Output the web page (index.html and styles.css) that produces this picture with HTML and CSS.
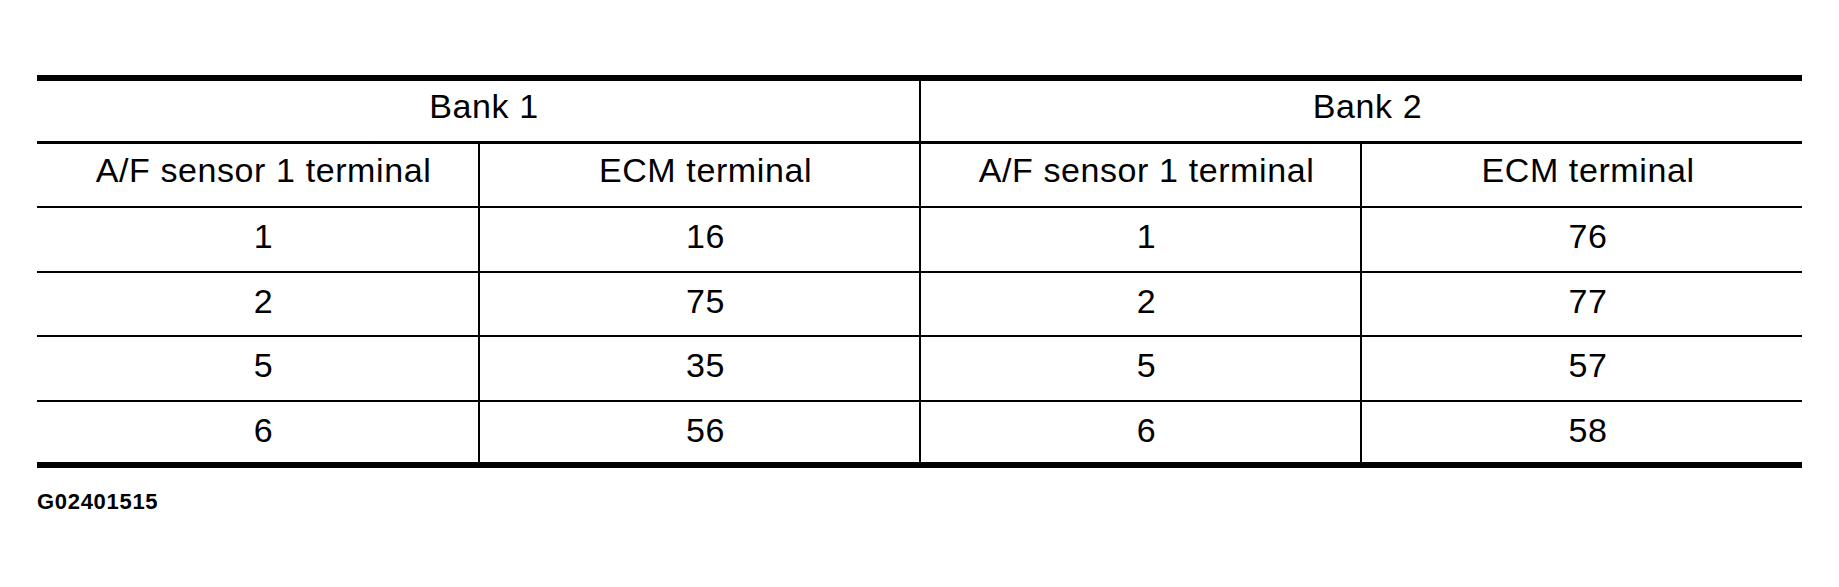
FILE: index.html
```html
<!DOCTYPE html>
<html lang="en">
<head>
<meta charset="utf-8">
<title>A/F sensor terminals</title>
<link rel="stylesheet" href="styles.css">
</head>
<body>
<div class="page">
  <table class="terms">
    <colgroup>
      <col class="c1"><col class="c2"><col class="c3"><col class="c4">
    </colgroup>
    <thead>
      <tr class="bank-row">
        <th colspan="2">Bank 1</th>
        <th colspan="2" class="sep">Bank 2</th>
      </tr>
      <tr class="head-row">
        <th>A/F sensor 1 terminal</th>
        <th class="sep">ECM terminal</th>
        <th class="sep">A/F sensor 1 terminal</th>
        <th class="sep">ECM terminal</th>
      </tr>
    </thead>
    <tbody>
      <tr class="r1"><td>1</td><td class="sep">16</td><td class="sep">1</td><td class="sep">76</td></tr>
      <tr class="r2"><td>2</td><td class="sep">75</td><td class="sep">2</td><td class="sep">77</td></tr>
      <tr class="r3"><td>5</td><td class="sep">35</td><td class="sep">5</td><td class="sep">57</td></tr>
      <tr class="r4 last"><td>6</td><td class="sep">56</td><td class="sep">6</td><td class="sep">58</td></tr>
    </tbody>
  </table>
  <div class="code">G02401515</div>
</div>
</body>
</html>
```
FILE: styles.css
```css
* { box-sizing: border-box; }
html, body { margin: 0; padding: 0; background: #fff; }
body { font-family: "Liberation Sans", Arial, sans-serif; color: #000; }
.page { padding: 75px 0 0 37px; }
.terms {
  width: 1765px;
  table-layout: fixed;
  border-collapse: separate;
  border-spacing: 0;
  border-top: 6px solid #000;
  border-bottom: 6px solid #000;
}
.c1, .c2, .c3 { width: 441px; }
.c4 { width: 442px; }
.terms th, .terms td {
  font-weight: normal;
  font-size: 34px;
  line-height: 38px;
  letter-spacing: 0.6px;
  text-align: center;
  vertical-align: top;
  padding: 9px 0 16px 12px;
  border-bottom: 2px solid #000;
  white-space: nowrap;
}
.terms .sep { border-left: 2px solid #000; }
.bank-row th { padding-top: 6px; padding-bottom: 16px; border-bottom-width: 3px; }
.head-row th { padding-top: 7px; padding-bottom: 17px; }
.r2 td { padding-bottom: 15px; }
.r4 td { padding-bottom: 13px; border-bottom: none; }
.code {
  margin-top: 21px;
  font-size: 22px;
  line-height: 25px;
  letter-spacing: 0.7px;
  font-weight: bold;
}
```
